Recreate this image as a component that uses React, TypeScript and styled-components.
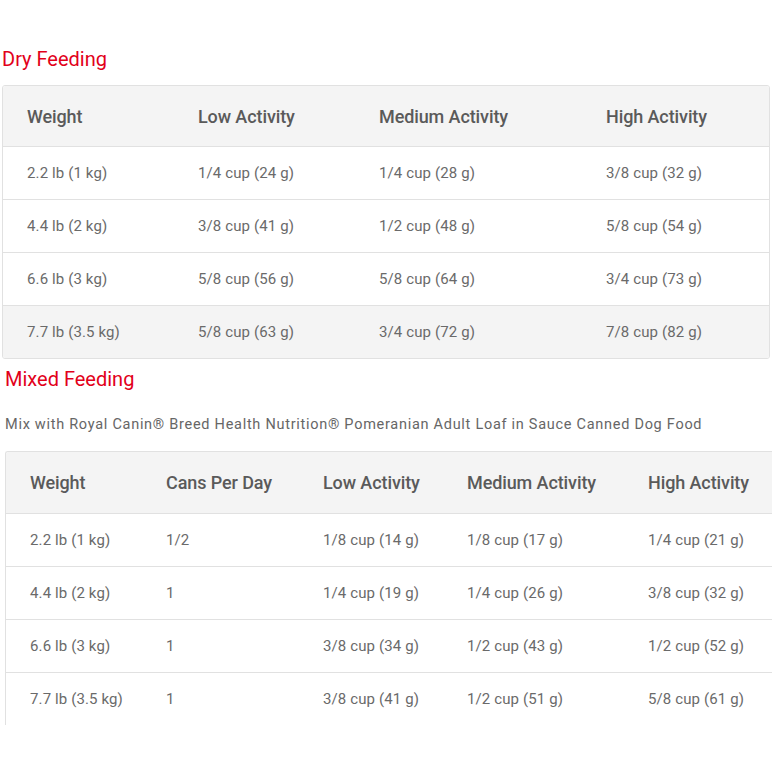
import React from "react";
import styled, { createGlobalStyle } from "styled-components";

const GlobalStyle = createGlobalStyle`
  html, body {
    margin: 0;
    padding: 0;
    background: #ffffff;
    overflow: hidden;
  }
  body {
    font-family: Roboto, "Liberation Sans", sans-serif;
  }
`;

const Page = styled.main`
  width: 774px;
  padding-top: 47px;
  display: flex;
  flex-direction: column;
`;

const Section = styled.section<{ $inset: number; $top?: number }>`
  margin-left: ${(p) => p.$inset}px;
  margin-top: ${(p) => p.$top ?? 0}px;
  display: flex;
  flex-direction: column;
`;

const Title = styled.h2<{ $gap: number }>`
  margin: 0 0 ${(p) => p.$gap}px 0;
  font-size: 20px;
  line-height: 24px;
  font-weight: 400;
  color: #e2001a;
  letter-spacing: 0;
`;

const Note = styled.p`
  margin: 0 0 16px 0;
  font-size: 14.5px;
  line-height: 20px;
  letter-spacing: 0.72px;
  color: #666666;
  white-space: nowrap;
`;

const TableBox = styled.div<{ $open?: boolean }>`
  width: 766px;
  border: 1px solid #e1e1e1;
  border-radius: 3px;
  overflow: hidden;
  ${(p) =>
    p.$open
      ? `
    border-right: none;
    border-bottom: none;
    border-radius: 3px 0 0 0;
  `
      : ""}
`;

const Row = styled.div<{ $cols: string; $h: number; $shade?: boolean; $last?: boolean }>`
  display: grid;
  grid-template-columns: ${(p) => p.$cols};
  align-items: center;
  height: ${(p) => p.$h}px;
  background: ${(p) => (p.$shade ? "#f4f4f4" : "#ffffff")};
  border-bottom: ${(p) => (p.$last ? "none" : "1px solid #e1e1e1")};
`;

const HeadCell = styled.div`
  padding-left: 24px;
  font-size: 18px;
  font-weight: 500;
  letter-spacing: -0.1px;
  color: #5a5a5a;
  white-space: nowrap;
`;

const Cell = styled.div`
  padding-left: 24px;
  font-size: 15px;
  font-weight: 400;
  letter-spacing: 0.12px;
  color: #6a6a6a;
  white-space: nowrap;
`;

type TableProps = {
  cols: string;
  head: string[];
  rows: string[][];
  shadeLast?: boolean;
  open?: boolean;
  headHeight?: number;
};

function FeedingTable({ cols, head, rows, shadeLast, open, headHeight = 60 }: TableProps) {
  return (
    <TableBox $open={open}>
      <Row $cols={cols} $h={headHeight} $shade>
        {head.map((h) => (
          <HeadCell key={h}>{h}</HeadCell>
        ))}
      </Row>
      {rows.map((r, i) => (
        <Row
          key={i}
          $cols={cols}
          $h={52}
          $shade={shadeLast && i === rows.length - 1}
          $last={i === rows.length - 1}
        >
          {r.map((c, j) => (
            <Cell key={j}>{c}</Cell>
          ))}
        </Row>
      ))}
    </TableBox>
  );
}

const dryRows = [
  ["2.2 lb (1 kg)", "1/4 cup (24 g)", "1/4 cup (28 g)", "3/8 cup (32 g)"],
  ["4.4 lb (2 kg)", "3/8 cup (41 g)", "1/2 cup (48 g)", "5/8 cup (54 g)"],
  ["6.6 lb (3 kg)", "5/8 cup (56 g)", "5/8 cup (64 g)", "3/4 cup (73 g)"],
  ["7.7 lb (3.5 kg)", "5/8 cup (63 g)", "3/4 cup (72 g)", "7/8 cup (82 g)"],
];

const mixedRows = [
  ["2.2 lb (1 kg)", "1/2", "1/8 cup (14 g)", "1/8 cup (17 g)", "1/4 cup (21 g)"],
  ["4.4 lb (2 kg)", "1", "1/4 cup (19 g)", "1/4 cup (26 g)", "3/8 cup (32 g)"],
  ["6.6 lb (3 kg)", "1", "3/8 cup (34 g)", "1/2 cup (43 g)", "1/2 cup (52 g)"],
  ["7.7 lb (3.5 kg)", "1", "3/8 cup (41 g)", "1/2 cup (51 g)", "5/8 cup (61 g)"],
];

export default function App() {
  return (
    <>
      <GlobalStyle />
      <Page>
        <Section $inset={2}>
          <Title $gap={14}>Dry Feeding</Title>
          <FeedingTable
            cols="171px 181px 227px 1fr"
            head={["Weight", "Low Activity", "Medium Activity", "High Activity"]}
            rows={dryRows}
            shadeLast
          />
        </Section>
        <Section $inset={5} $top={8}>
          <Title $gap={24}>Mixed Feeding</Title>
          <Note>
            Mix with Royal Canin® Breed Health Nutrition® Pomeranian Adult Loaf in Sauce Canned Dog Food
          </Note>
          <FeedingTable
            cols="136px 157px 144px 181px 1fr"
            head={["Weight", "Cans Per Day", "Low Activity", "Medium Activity", "High Activity"]}
            rows={mixedRows}
            open
            headHeight={61}
          />
        </Section>
      </Page>
    </>
  );
}
